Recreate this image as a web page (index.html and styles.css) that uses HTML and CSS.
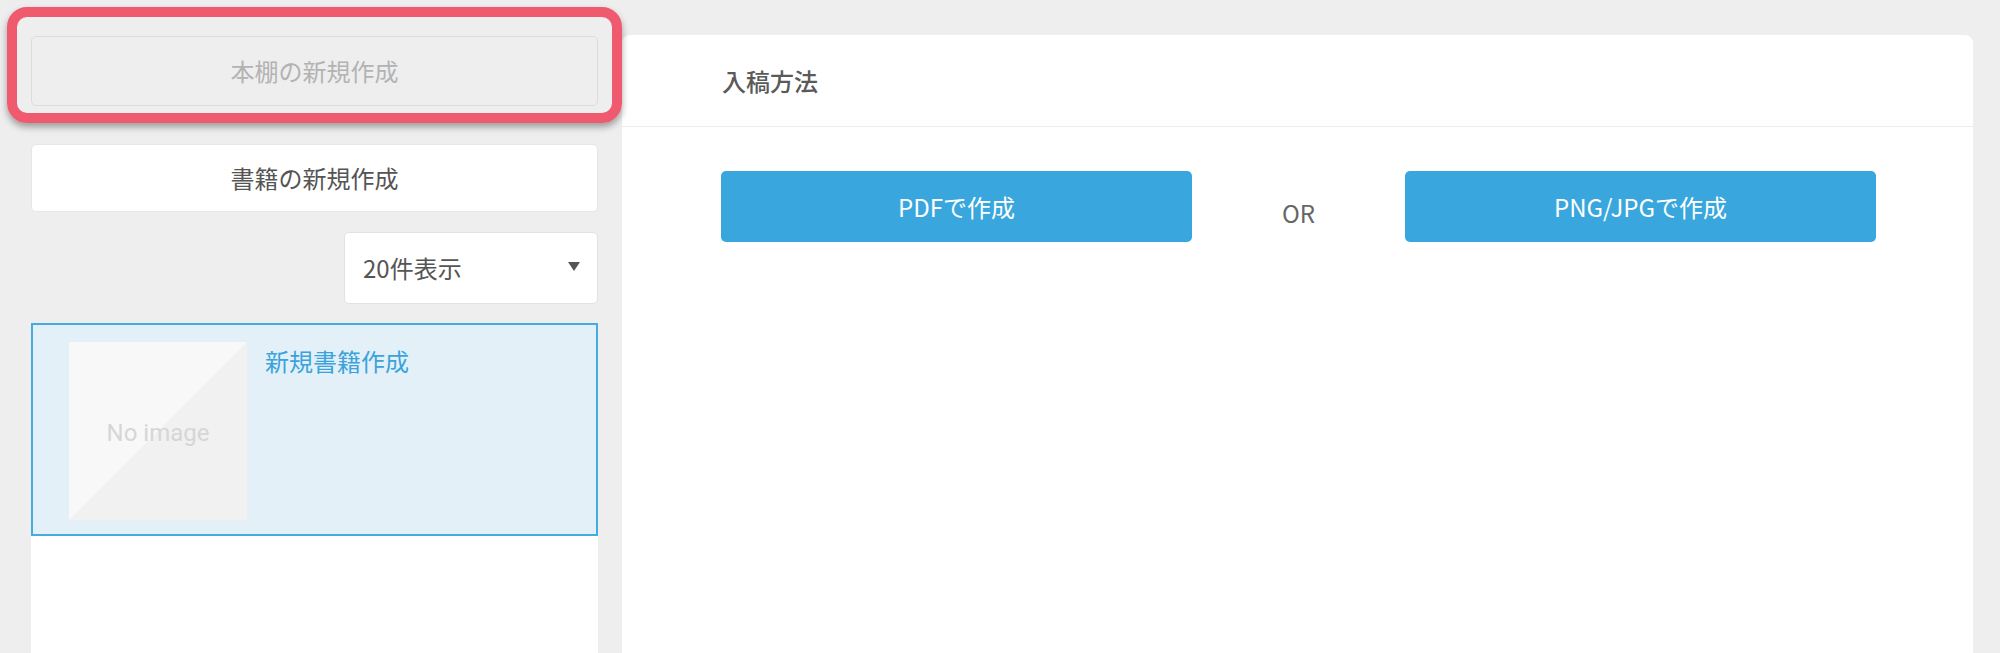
FILE: index.html
```html
<!DOCTYPE html>
<html lang="ja">
<head>
<meta charset="utf-8">
<title>入稿方法</title>
<link rel="stylesheet" href="styles.css">
</head>
<body>
<div class="page">
  <aside class="sidebar">
    <button class="btn btn-disabled" disabled>本棚の新規作成</button>
    <button class="btn btn-white">書籍の新規作成</button>
    <div class="select-row">
      <div class="select">
        <span>20件表示</span>
        <svg class="caret" width="12" height="9" viewBox="0 0 12 9"><path d="M0 0 H12 L6 9 Z" fill="#555"/></svg>
      </div>
    </div>
    <div class="list">
      <div class="item">
        <div class="thumb"><span>No image</span></div>
        <div class="item-title">新規書籍作成</div>
      </div>
    </div>
  </aside>
  <main class="panel">
    <div class="panel-head">入稿方法</div>
    <div class="panel-body">
      <button class="btn-blue">PDFで作成</button>
      <div class="or">OR</div>
      <button class="btn-blue">PNG/JPGで作成</button>
    </div>
  </main>
</div>
<div class="highlight"></div>
</body>
</html>
```
FILE: styles.css
```css
html, body {
  margin: 0;
  padding: 0;
}
body {
  background: #eeeeee;
  font-family: "Noto Sans CJK JP", "Noto Sans", sans-serif;
  color: #555;
  width: 2000px;
  height: 653px;
  overflow: hidden;
  position: relative;
}
.page {
  display: flex;
  gap: 24px;
  padding: 36px 27px 0 31px;
  height: 617px;
}
.sidebar {
  width: 567px;
  display: flex;
  flex-direction: column;
  flex-shrink: 0;
}
.btn {
  font-family: inherit;
  font-size: 24px;
  width: 567px;
  border-radius: 5px;
  display: flex;
  align-items: center;
  justify-content: center;
  padding: 0 0 2px;
  margin: 0;
}
.btn-disabled {
  height: 70px;
  background: #eeeeee;
  border: 1px solid #dcdcdc;
  color: #b3b3b3;
}
.btn-white {
  height: 68px;
  margin-top: 38px;
  background: #fff;
  border: 1px solid #e6e6e6;
  color: #555;
}
.select-row {
  display: flex;
  justify-content: flex-end;
  margin-top: 20px;
}
.select {
  width: 254px;
  height: 72px;
  box-sizing: border-box;
  background: #fff;
  border: 1px solid #e2e2e2;
  border-radius: 5px;
  display: flex;
  align-items: center;
  justify-content: space-between;
  padding: 0 17px 2px 18px;
  font-size: 24px;
  color: #555;
}
.caret {
  display: block;
  margin-top: -1px;
}
.list {
  margin-top: 19px;
  background: #fff;
  flex: 1;
}
.item {
  height: 213px;
  box-sizing: border-box;
  border: 2px solid #45ace2;
  background: #e3f0f7;
  display: flex;
  align-items: flex-start;
  padding: 17px 0 0 36px;
  gap: 18px;
}
.thumb {
  width: 178px;
  height: 178px;
  background: linear-gradient(to bottom right, #f8f8f8 0%, #f8f8f8 49.8%, #f1f1f1 50.2%, #f1f1f1 100%);
  display: flex;
  align-items: center;
  justify-content: center;
  flex-shrink: 0;
}
.thumb span {
  font-family: Roboto, "Noto Sans", sans-serif;
  font-size: 24px;
  color: #d6d6d6;
  margin-top: 4px;
  margin-left: 0;
}
.item-title {
  font-size: 24px;
  color: #3aa3dc;
  line-height: 1;
  margin-top: 7px;
}
.panel {
  flex: 1;
  background: #fff;
  border-radius: 8px 8px 0 0;
  margin-top: -1px;
  display: flex;
  flex-direction: column;
}
.panel-head {
  height: 92px;
  box-sizing: border-box;
  border-bottom: 1px solid #ececec;
  padding-left: 100px;
  display: flex;
  align-items: center;
  font-size: 24px;
  font-weight: 500;
  color: #5a5a5a;
}
.panel-body {
  display: grid;
  grid-template-columns: 1fr 213px 1fr;
  align-items: center;
  padding: 44px 97px 0 99px;
}
.btn-blue {
  height: 71px;
  border: none;
  border-radius: 5px;
  background: #39a7dd;
  color: #fff;
  font-family: inherit;
  font-size: 24px;
  padding: 0;
}
.or {
  text-align: center;
  font-size: 24px;
  color: #666;
  padding-top: 12px;
}
.highlight {
  position: absolute;
  left: 7px;
  top: 7px;
  width: 595px;
  height: 96px;
  border: 10px solid #ef5a6f;
  border-radius: 20px;
  box-shadow: 0 4px 7px rgba(0, 0, 0, 0.35);
}
```
